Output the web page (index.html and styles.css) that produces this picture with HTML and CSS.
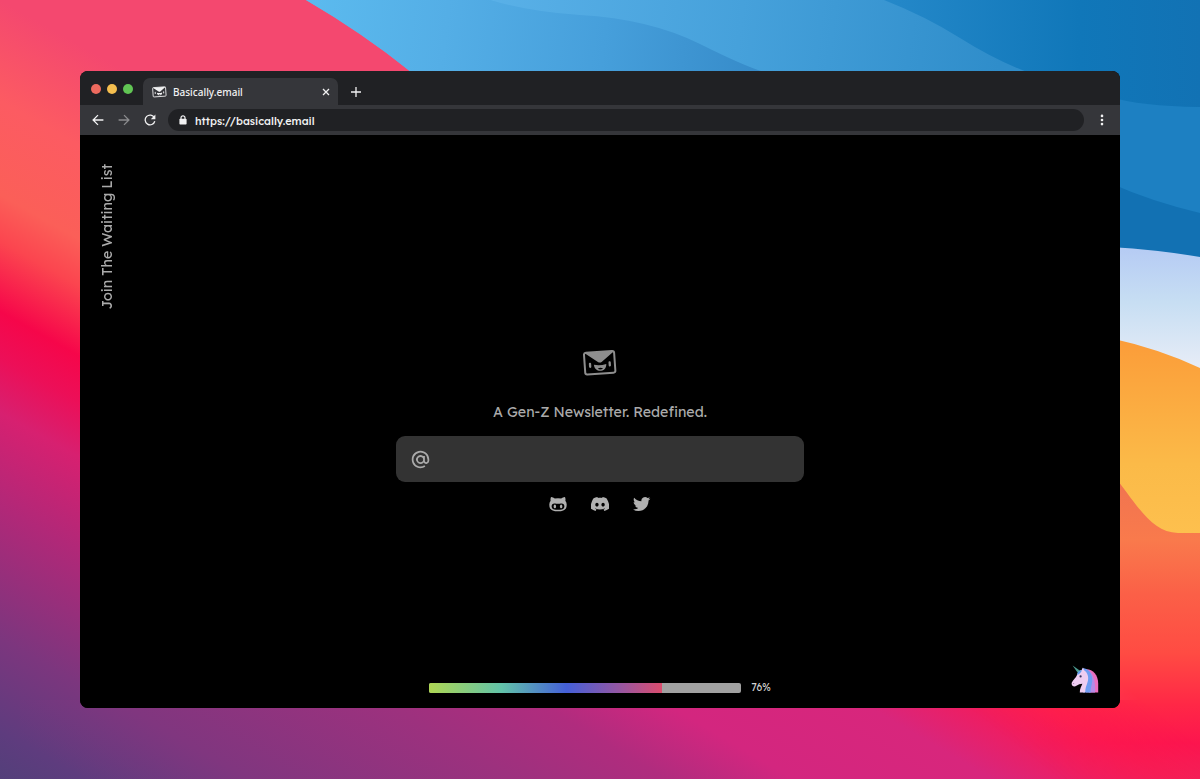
FILE: index.html
```html
<!DOCTYPE html>
<html lang="en">

<head>
    <meta charset="UTF-8">
    <meta name="viewport" content="width=device-width, initial-scale=1.0">
    <title>Basically.email</title>
    <link rel="stylesheet" href="styles.css">
</head>

<body>
    <!-- Desktop wallpaper -->
    <svg class="wallpaper" viewBox="0 0 1200 779" preserveAspectRatio="none" aria-hidden="true">
        <defs>
            <linearGradient id="dusk" gradientUnits="userSpaceOnUse" x1="0" y1="0" x2="-332" y2="593">
                <stop offset="0" stop-color="#f4486f" />
                <stop offset=".13" stop-color="#fc5b62" />
                <stop offset=".25" stop-color="#fb5f58" />
                <stop offset=".31" stop-color="#fb454f" />
                <stop offset=".4" stop-color="#f6064a" />
                <stop offset=".46" stop-color="#ec0f58" />
                <stop offset=".53" stop-color="#d72070" />
                <stop offset=".65" stop-color="#b12878" />
                <stop offset=".82" stop-color="#7c367e" />
                <stop offset=".94" stop-color="#5e3c7e" />
                <stop offset="1" stop-color="#533f7a" />
            </linearGradient>
            <linearGradient id="floor" gradientUnits="userSpaceOnUse" x1="20" y1="740" x2="318" y2="233">
                <stop offset="0" stop-color="#673b80" stop-opacity="0" />
                <stop offset=".14" stop-color="#80367f" />
                <stop offset=".37" stop-color="#9d317e" />
                <stop offset=".5" stop-color="#b02c7e" />
                <stop offset=".61" stop-color="#d3267f" />
                <stop offset=".78" stop-color="#d8267c" />
                <stop offset=".87" stop-color="#f01d60" />
                <stop offset=".94" stop-color="#fd1850" />
                <stop offset="1" stop-color="#fc164e" />
            </linearGradient>
            <linearGradient id="ember" gradientUnits="userSpaceOnUse" x1="0" y1="480" x2="0" y2="779">
                <stop offset="0" stop-color="#f07450" />
                <stop offset=".2" stop-color="#f97a4c" />
                <stop offset=".38" stop-color="#fb6047" />
                <stop offset=".58" stop-color="#ff4b43" />
                <stop offset=".75" stop-color="#ff2846" />
                <stop offset=".88" stop-color="#fc154e" />
                <stop offset="1" stop-color="#f02159" />
            </linearGradient>
            <linearGradient id="fade" gradientUnits="userSpaceOnUse" x1="1060" y1="779" x2="1130" y2="690">
                <stop offset="0" stop-color="#000" />
                <stop offset="1" stop-color="#fff" />
            </linearGradient>
            <mask id="right-edge">
                <rect x="900" y="470" width="300" height="309" fill="url(#fade)" />
            </mask>
            <linearGradient id="sky" gradientUnits="userSpaceOnUse" x1="340" y1="0" x2="1200" y2="0">
                <stop offset="0" stop-color="#5ab8ec" />
                <stop offset=".3" stop-color="#4ba6e1" />
                <stop offset=".65" stop-color="#2387c8" />
                <stop offset=".86" stop-color="#1077b9" />
                <stop offset="1" stop-color="#1272b4" />
            </linearGradient>
            <linearGradient id="wave-back" gradientUnits="userSpaceOnUse" x1="480" y1="0" x2="1000" y2="60">
                <stop offset="0" stop-color="#5ab1e8" />
                <stop offset=".5" stop-color="#46a1db" />
                <stop offset="1" stop-color="#2f8dca" />
            </linearGradient>
            <linearGradient id="wave-front" gradientUnits="userSpaceOnUse" x1="310" y1="20" x2="760" y2="75">
                <stop offset="0" stop-color="#5bbaee" />
                <stop offset=".3" stop-color="#54aee6" />
                <stop offset=".65" stop-color="#469fdb" />
                <stop offset="1" stop-color="#368bc9" />
            </linearGradient>
            <linearGradient id="cloud" x1="0" y1="0" x2="0" y2="1">
                <stop offset="0" stop-color="#b5cbf4" />
                <stop offset=".45" stop-color="#c7def3" />
                <stop offset="1" stop-color="#e8edf7" />
            </linearGradient>
            <linearGradient id="sun" x1="0" y1="0" x2="0" y2="1">
                <stop offset="0" stop-color="#fb9c39" />
                <stop offset=".65" stop-color="#fbba48" />
                <stop offset="1" stop-color="#fdc04e" />
            </linearGradient>
        </defs>
        <rect width="1200" height="779" fill="url(#dusk)" />
        <rect x="20" y="700" width="1180" height="79" fill="url(#floor)" />
        <rect x="900" y="470" width="300" height="309" fill="url(#ember)" mask="url(#right-edge)" />
        <path d="M306 0H1200V270H700L410 71Q362 33 306 0Z" fill="url(#sky)" />
        <path d="M490 0H884Q925 16 960 38T1027 72H700Z" fill="url(#wave-back)" />
        <path d="M306 0H490Q530 12 580 15Q650 19 700 44T768 73H412Q364 33 306 0Z" fill="url(#wave-front)" />
        <path d="M1110 97Q1140 106 1200 107V220L1110 184Z" fill="#1d80c2" />
        <path d="M1110 183Q1150 201 1200 213V260H1110Z" fill="#1271b3" />
        <path d="M1110 247Q1160 250 1200 257V370H1110Z" fill="url(#cloud)" />
        <path d="M1110 338Q1160 349 1200 368V533H1178C1150 532 1138 505 1110 471Z" fill="url(#sun)" />
    </svg>

    <div class="browser">
        <!-- Tab strip -->
        <div class="tab-strip">
            <div class="lights">
                <span class="light red"></span>
                <span class="light yellow"></span>
                <span class="light green"></span>
            </div>
            <div class="tab">
                <svg class="favicon" viewBox="0 0 34 28">
                    <use href="#envelope" />
                </svg>
                <span class="tab-title">Basically.email</span>
                <svg class="tab-close" viewBox="0 0 8 8">
                    <path d="M1 1l6 6M7 1L1 7" />
                </svg>
            </div>
            <svg class="new-tab" viewBox="0 0 12 12">
                <path d="M6 1v10M1 6h10" />
            </svg>
        </div>

        <!-- Toolbar -->
        <div class="toolbar">
            <svg class="nav-icon" viewBox="0 0 12 12">
                <path d="M11.4 6H1.2M6 1.1L1.1 6L6 10.9" />
            </svg>
            <svg class="nav-icon disabled" viewBox="0 0 12 12">
                <path d="M.6 6h10.2M6 1.1L10.9 6L6 10.9" />
            </svg>
            <svg class="nav-icon" viewBox="0 0 12 12">
                <path d="M10.4 3.6A4.9 4.9 0 1 0 10.8 7.3" />
                <path class="solid" d="M11.4.5v4.7H6.8z" />
            </svg>
            <div class="address">
                <svg class="lock" viewBox="0 0 8 10">
                    <rect x=".4" y="3.8" width="7.2" height="5.8" rx=".8" />
                    <path d="M2 4.4V2.8a2 2 0 0 1 4 0v1.6" />
                </svg>
                <span class="url">https://basically.email</span>
            </div>
            <svg class="menu" viewBox="0 0 4 12">
                <circle cx="2" cy="1.9" r="1.3" />
                <circle cx="2" cy="6" r="1.3" />
                <circle cx="2" cy="10.1" r="1.3" />
            </svg>
        </div>

        <!-- Landing page -->
        <div class="page">
            <a class="waiting-list">Join The Waiting List</a>

            <div class="hero">
                <svg class="logo" viewBox="0 0 34 28">
                    <g id="envelope" transform="rotate(-4 17 14)">
                        <rect x="1.6" y="2.8" width="30.2" height="21.8" rx="2" fill="none" stroke="currentColor" stroke-width="2" />
                        <path d="M2 3h30L19 12.8Q17 14.4 15 12.8Z" fill="currentColor" />
                        <rect x="5.8" y="13" width="2.3" height="5.2" rx="1.1" fill="currentColor" />
                        <rect x="25.5" y="13" width="2.3" height="5.2" rx="1.1" fill="currentColor" />
                        <path fill-rule="evenodd" d="M10.8 15.4Q17 17 23.2 15.4C23 24 11 24 10.8 15.4ZM14.3 19.7Q17 18 19.7 19.7Q17 21.5 14.3 19.7Z" fill="currentColor" />
                    </g>
                </svg>
                <h1 class="tagline">A Gen-Z Newsletter. Redefined.</h1>
                <div class="email-box">
                    <svg class="at" viewBox="0 0 24 24">
                        <path d="M20 12a8 8 0 1 0-3.562 6.657l1.11 1.664A9.953 9.953 0 0 1 12 22C6.477 22 2 17.523 2 12S6.477 2 12 2s10 4.477 10 10v1.5a3.5 3.5 0 0 1-6.396 1.966A5 5 0 1 1 15 8h2v5.5a1.5 1.5 0 0 0 3 0V12zm-8-3a3 3 0 1 0 0 6 3 3 0 0 0 0-6z" />
                    </svg>
                </div>
                <div class="socials">
                    <svg class="social" viewBox="0 0 24 24">
                        <path fill-rule="evenodd" d="M2.7 2.8C4.6 2.8 6.3 3.8 7.8 4.8Q12 4 16.2 4.8C17.7 3.8 19.4 2.8 21.3 2.8Q22.4 5.2 21.8 7.6Q23.6 9.6 23.6 12.5C23.6 19.5 20 21.8 12 21.8S.4 19.5.4 12.5Q.4 9.6 2.2 7.6Q1.6 5.2 2.7 2.8ZM7.2 11.3C4.8 11.3 3.5 12.9 3.5 15C3.5 19 6.8 19.8 12 19.8S20.5 19 20.5 15C20.5 12.9 19.2 11.3 16.8 11.3C15 11.3 14 11.7 12 11.7S9 11.3 7.2 11.3Z" />
                        <ellipse cx="7.8" cy="15.3" rx="1.6" ry="2.5" />
                        <ellipse cx="16.2" cy="15.3" rx="1.6" ry="2.5" />
                    </svg>
                    <svg class="social" viewBox=".3 .6 23.4 22.8">
                        <path d="M20.317 4.3698a19.7913 19.7913 0 00-4.8851-1.5152.0741.0741 0 00-.0785.0371c-.211.3753-.4447.8648-.6083 1.2495-1.8447-.2762-3.68-.2762-5.4868 0-.1636-.3933-.4058-.8742-.6177-1.2495a.077.077 0 00-.0785-.037 19.7363 19.7363 0 00-4.8852 1.515.0699.0699 0 00-.0321.0277C.5334 9.0458-.319 13.5799.0992 18.0578a.0824.0824 0 00.0312.0561c2.0528 1.5076 4.0413 2.4228 5.9929 3.0294a.0777.0777 0 00.0842-.0276c.4616-.6304.8731-1.2952 1.226-1.9942a.076.076 0 00-.0416-.1057c-.6528-.2476-1.2743-.5495-1.8722-.8923a.077.077 0 01-.0076-.1277c.1258-.0943.2517-.1923.3718-.2914a.0743.0743 0 01.0776-.0105c3.9278 1.7933 8.18 1.7933 12.0614 0a.0739.0739 0 01.0785.0095c.1202.099.246.1981.3728.2924a.077.077 0 01-.0066.1276 12.2986 12.2986 0 01-1.873.8914.0766.0766 0 00-.0407.1067c.3604.698.7719 1.3628 1.225 1.9932a.076.076 0 00.0842.0286c1.961-.6067 3.9495-1.5219 6.0023-3.0294a.077.077 0 00.0313-.0552c.5004-5.177-.8382-9.6739-3.5485-13.6604a.061.061 0 00-.0312-.0286zM8.02 15.3312c-1.1825 0-2.1569-1.0857-2.1569-2.419 0-1.3332.9555-2.4189 2.157-2.4189 1.2108 0 2.1757 1.0952 2.1568 2.419 0 1.3332-.9555 2.4189-2.1569 2.4189zm7.9748 0c-1.1825 0-2.1569-1.0857-2.1569-2.419 0-1.3332.9554-2.4189 2.1569-2.4189 1.2108 0 2.1757 1.0952 2.1568 2.419 0 1.3332-.946 2.4189-2.1568 2.4189Z" />
                    </svg>
                    <svg class="social" viewBox="0 0 25 24">
                        <path d="M23.953 4.57a10 10 0 01-2.825.775 4.958 4.958 0 002.163-2.723c-.951.555-2.005.959-3.127 1.184a4.92 4.92 0 00-8.384 4.482C7.69 8.095 4.067 6.13 1.64 3.162a4.822 4.822 0 00-.666 2.475c0 1.71.87 3.213 2.188 4.096a4.904 4.904 0 01-2.228-.616v.06a4.923 4.923 0 003.946 4.827 4.996 4.996 0 01-2.212.085 4.936 4.936 0 004.604 3.417 9.867 9.867 0 01-6.102 2.105c-.39 0-.779-.023-1.17-.067a13.995 13.995 0 007.557 2.209c9.053 0 13.998-7.496 13.998-13.985 0-.21 0-.42-.015-.63A9.935 9.935 0 0024 4.59z" />
                    </svg>
                </div>
            </div>

            <div class="progress">
                <div class="bar">
                    <div class="bar-fill" style="width: 74.5%"></div>
                </div>
                <span class="percent">76%</span>
            </div>

            <svg class="unicorn" viewBox="0 0 28 28">
                <path d="M1.6 .4L9.4 6L7.2 8.4Z" fill="#4c9c91" />
                <path d="M14 4.4C21 3.4 27.2 9.6 27.2 18.6V27.4H18Z" fill="#ec6fc0" />
                <path d="M13 4C20 4.4 24.6 11 24 27.4H15Z" fill="#b58be6" />
                <path d="M11.6 3C18 3.6 21.8 9.4 21.2 16.4C20.8 20.4 19.4 22.6 19.6 27.4H12Z" fill="#6f9df2" />
                <path d="M12 2.4L13 5.2C17 7.6 18 12.6 16.6 17C15.6 20.4 14.2 22.6 14.2 27.4H8.8C8.6 24 10.6 21 11.4 18.8C9 18.8 7.4 19.6 5.4 20.8C3.4 22.2.6 21.2.6 18.8C.6 16 5.2 13 6 10C6.6 7.4 8.4 5.4 10.6 5Z" fill="#eecdf1" />
                <path d="M6 9.8C6.4 7.2 8.4 5.2 10.8 5C10.4 7.4 8.6 9.2 6 9.8Z" fill="#5e9df0" />
                <circle cx="9.6" cy="11.4" r="1.1" fill="#38335f" />
                <circle cx="2.7" cy="18.4" r=".5" fill="#95649f" />
            </svg>
        </div>
    </div>
</body>

</html>
```

FILE: styles.css
```css
* {
    box-sizing: border-box;
}

body {
    margin: 0;
    height: 779px;
    padding: 71px 80px;
    overflow: hidden;
    font-family: Lexend, Lato, sans-serif;
}

svg {
    display: block;
    flex-shrink: 0;
}

/* Wallpaper sits behind the window */
.wallpaper {
    position: absolute;
    top: 0;
    left: 0;
    z-index: -1;
    width: 1200px;
    height: 779px;
}

/* Browser window */
.browser {
    display: flex;
    flex-direction: column;
    width: 1040px;
    height: 637px;
    border-radius: 8px;
    overflow: hidden;
    background: #000;
}

.tab-strip {
    display: flex;
    height: 34px;
    padding-left: 11px;
    background: #202124;
}

.lights {
    display: flex;
    gap: 6px;
    padding-top: 13px;
    margin-right: 10px;
}

.light {
    width: 10px;
    height: 10px;
    border-radius: 50%;
}

.red {
    background: #ed6a5e;
}

.yellow {
    background: #f5bf4f;
}

.green {
    background: #61c554;
}

.tab {
    display: flex;
    align-items: center;
    width: 195px;
    height: 27px;
    margin-top: 7px;
    padding: 0 8px 0 9px;
    border-radius: 7px 7px 0 0;
    background: #35363a;
    color: #f1f1f2;
}

.favicon {
    width: 15px;
    height: 12px;
    margin-right: 6px;
}

.tab-title {
    font-family: "Noto Sans", sans-serif;
    font-size: 10px;
    font-weight: 500;
    line-height: 14px;
}

.tab-close {
    width: 8px;
    height: 8px;
    margin-left: auto;
}

.tab-close path,
.new-tab path,
.nav-icon path {
    fill: none;
    stroke: #f1f1f2;
    stroke-width: 1.3;
}

.new-tab {
    width: 12px;
    height: 12px;
    margin: 15px 0 0 12px;
}

.toolbar {
    display: flex;
    align-items: center;
    height: 30px;
    padding: 0 16px 0 12px;
    background: #35363a;
}

.nav-icon {
    width: 12px;
    height: 12px;
    margin-right: 14px;
}

.nav-icon .solid {
    fill: #f1f1f2;
    stroke: none;
}

.disabled {
    opacity: .45;
}

.address {
    display: flex;
    align-items: center;
    flex: 1;
    height: 22px;
    margin-left: -2px;
    margin-right: 16px;
    padding-left: 11px;
    border-radius: 11px;
    background: #202124;
}

.lock {
    width: 8px;
    height: 10px;
    margin-right: 8px;
    fill: #f1f1f2;
}

.lock path {
    fill: none;
    stroke: #f1f1f2;
    stroke-width: 1.2;
}

.url {
    padding-top: 2px;
    color: #f1f1f2;
    font-size: 10.8px;
    font-weight: 500;
    line-height: 16px;
}

.menu {
    width: 4px;
    height: 12px;
    fill: #f1f1f2;
}

/* Landing page */
.page {
    display: flex;
    flex-direction: column;
    align-items: center;
    position: relative;
    flex: 1;
    background: #000;
    color: #aaa;
}

.waiting-list {
    position: absolute;
    top: 29px;
    left: 18px;
    writing-mode: vertical-rl;
    transform: rotate(180deg);
    font-size: 14.25px;
    line-height: 18px;
}

.hero {
    display: flex;
    flex-direction: column;
    align-items: center;
    padding-top: 214px;
}

.logo {
    width: 34px;
    height: 28px;
    color: #8e8e8e;
}

.tagline {
    margin: 25px 0 14px;
    font-size: 14.2px;
    font-weight: 400;
    line-height: 20px;
}

.email-box {
    display: flex;
    align-items: center;
    width: 408px;
    height: 46px;
    padding-left: 14px;
    border-radius: 9px;
    background: #333;
}

.at {
    width: 21px;
    height: 21px;
    fill: #aaa;
}

.socials {
    display: flex;
    gap: 24px;
    margin-top: 13px;
}

.social {
    width: 18px;
    height: 18px;
    fill: #b0b0b0;
}

.progress {
    display: flex;
    align-items: center;
    gap: 10px;
    margin-top: auto;
    padding-bottom: 14px;
}

.bar {
    width: 312px;
    height: 10px;
    border-radius: 2px;
    overflow: hidden;
    background: #a1a1a1;
}

.bar-fill {
    height: 100%;
    background: linear-gradient(90deg, #aed653 0%, #62c3a9 31%, #4560d8 59%, #9a569f 83%, #da4d6e 100%);
}

.percent {
    padding-top: 1px;
    color: #d2d2d2;
    font-size: 10.2px;
    line-height: 12px;
}

.unicorn {
    position: absolute;
    right: 21px;
    bottom: 15px;
    width: 28px;
    height: 28px;
}
```
